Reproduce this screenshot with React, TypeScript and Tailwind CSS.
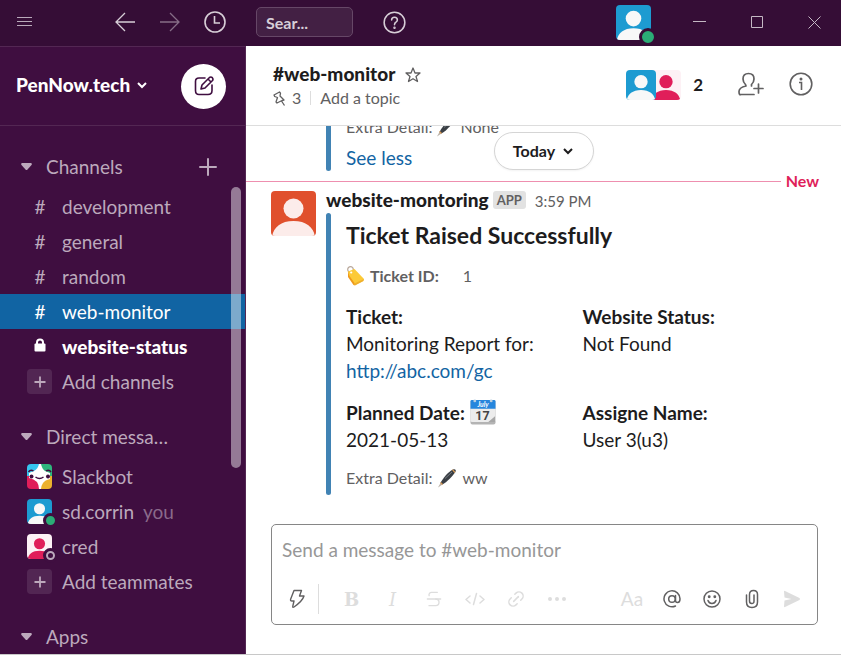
import { useId, type ReactNode } from "react";
import { Link2, Strikethrough } from "lucide-react";

type AvatarProps = { bg: string; fg: string; className: string };

function Avatar({ bg, fg, className }: AvatarProps) {
  return (
    <svg viewBox="0 0 36 36" className={className} aria-hidden="true">
      <rect width="36" height="36" fill={bg} />
      <circle cx="18" cy="14" r="8" fill={fg} />
      <path d="M1 36c1-7 7-12 17-12s16 5 17 12z" fill={fg} />
    </svg>
  );
}

function Chevron({ className }: { className: string }) {
  return (
    <svg viewBox="0 0 12 12" className={className} fill="none" stroke="currentColor" strokeWidth="2" aria-hidden="true">
      <path d="M2 4l4 4 4-4" />
    </svg>
  );
}

function Pen({ className }: { className: string }) {
  return (
    <svg viewBox="0 0 20 20" className={className} aria-hidden="true">
      <path d="M1 19.500l2.500-4.500 2 1.500z" fill="#b9b0a6" />
      <path d="M3.500 15C6 10 11 4 16 1.500c2-1 3.500.500 2.500 2.200C15.500 8 10.500 13.500 5.500 16.500z" fill="#3a3f45" />
      <path d="M8 10.500l7-6.500" stroke="#858c92" strokeWidth="0.800" />
      <path d="M3.500 14.500l2 2M15.500 1.700l2.500 2.800" stroke="#d99a55" strokeWidth="1.200" />
    </svg>
  );
}

function Tag() {
  return (
    <svg viewBox="0 0 20 20" className="size-5" aria-hidden="true">
      <circle cx="4.500" cy="3.500" r="2.800" fill="none" stroke="#b8a79a" strokeWidth="1.200" />
      <path d="M2 5.500l6.500-2.500L18 13l-1 2-8 4-1.500-1-5-8z" fill="#fcca37" />
      <path d="M2 5.500v5.500l5.500 8 1.500.500-.5-2.500L3.500 10z" fill="#ef9a1d" />
      <path d="M9 19.500l8.500-4.500.5-2-9.500 4.500z" fill="#efaf2b" />
      <circle cx="5.200" cy="6.500" r="1.100" fill="#fff" />
    </svg>
  );
}

function CalendarIcon() {
  return (
    <svg viewBox="0 0 27 27" className="mb-[3px] size-[26px]" aria-hidden="true">
      <rect x="0.500" y="1" width="26" height="25.500" rx="2" fill="#b4b4b4" />
      <rect x="0.500" y="1" width="26" height="23" rx="2" fill="#ececec" />
      <path d="M.5 10V2.500Q.5 1 2 1h23q1.500 0 1.500 1.500V10z" fill="#2686dd" />
      <path d="M19 24l7-6v6z" fill="#a7a7a7" />
      <circle cx="5" cy="2" r="1.500" fill="#b8cee0" />
      <circle cx="22" cy="2" r="1.500" fill="#b8cee0" />
      <text x="13.500" y="8" textAnchor="middle" fontFamily="Lato" fontWeight="700" fontStyle="italic" fontSize="7" fill="#fff">July</text>
      <text x="13" y="22" textAnchor="middle" fontFamily="Roboto" fontWeight="700" fontSize="13" fill="#444">17</text>
    </svg>
  );
}

function SlackbotIcon() {
  const clip = useId();
  return (
    <svg viewBox="0 0 25 25" className="size-[25px]" aria-hidden="true">
      <clipPath id={clip}><rect width="25" height="25" rx="4" /></clipPath>
      <g clipPath={`url(#${clip})`}>
        <path d="M0 0h13v13H0z" fill="#36c5f0" />
        <path d="M12 0h13v13H12z" fill="#2eb67d" />
        <path d="M0 12h13v13H0z" fill="#e01e5a" />
        <path d="M12 12h13v13H12z" fill="#ecb22e" />
        <path d="M12 0h2q1 5 4 7l5 2v6q-5 1-7 4-2 3-2 6h-2q0-4-2-7-3-3-8-4V9l5-2q4-2 5-7z" fill="#fff" />
        <circle cx="4.500" cy="12.500" r="2" fill="#3f0e40" />
        <circle cx="21" cy="12.500" r="2" fill="#3f0e40" />
        <path d="M1.500 8q2-3 5-1M19 7q3-2 5 1M8.500 13q4 3 8 0" fill="none" stroke="#3f0e40" strokeWidth="1.500" />
      </g>
    </svg>
  );
}

function SectionHeading({ title, action }: { title: string; action?: ReactNode }) {
  return (
    <div className="mb-[5px] flex h-[35px] items-center pr-7 pl-[21px]">
      <button className="flex items-center gap-[14px]">
        <svg viewBox="0 0 11 7" className="h-[7px] w-[11px]" fill="currentColor" aria-hidden="true">
          <path d="M1 0h9q1.500.500.500 2L6.500 6.500q-1 1-2 0L.5 2Q-.5.500 1 0z" />
        </svg>
        <span className="pt-0.5">{title}</span>
      </button>
      {action}
    </div>
  );
}

type RowProps = { icon: ReactNode; children: ReactNode; tone?: string };

function Row({ icon, children, tone = "" }: RowProps) {
  return (
    <li>
      <a href="#" className={`flex h-[35px] items-center gap-[10px] pl-[27px] ${tone}`}>
        <span className="relative flex size-[25px] shrink-0 items-center justify-center">{icon}</span>
        <span className="pt-0.5">{children}</span>
      </a>
    </li>
  );
}

function Hash() {
  return <span className="pt-0.5 pl-px">#</span>;
}

function PlusTile() {
  return (
    <span className="flex size-[25px] items-center justify-center rounded bg-white/10">
      <svg viewBox="0 0 12 12" className="size-3" stroke="currentColor" strokeWidth="1.800" aria-hidden="true">
        <path d="M6 .5v11M.5 6h11" />
      </svg>
    </span>
  );
}

function Sidebar() {
  return (
    <nav className="relative flex w-[246px] shrink-0 flex-col overflow-hidden border-t border-r border-[#532753] bg-[#3f0e40] text-[19px] text-[#bca9bc]">
      <div className="flex h-[79px] shrink-0 items-center justify-between border-b border-[#532753] pr-[19px] pl-4">
        <button className="flex items-center gap-[6px] pb-0.5 font-black text-white">
          PenNow.tech
          <Chevron className="size-3" />
        </button>
        <button aria-label="New message" className="flex size-[45px] items-center justify-center rounded-full bg-white text-[#3f0e40]">
          <svg viewBox="0 0 20 20" className="size-5" fill="none" stroke="currentColor" strokeWidth="1.600" strokeLinejoin="round" strokeLinecap="round" aria-hidden="true">
            <path d="M11 2H5Q1.500 2 1.500 5.500v9Q1.500 18.500 5 18.500h9q4 0 4-4V9" />
            <path d="M7 13l1-4 7.500-7.500q1.500-1 2.800.2 1.200 1.300.2 2.800L11 12zM14 3l3 3" />
          </svg>
        </button>
      </div>
      <div className="min-h-0 flex-1 overflow-hidden pt-[23px]">
        <SectionHeading
          title="Channels"
          action={
            <button aria-label="Add channel" className="ml-auto">
              <svg viewBox="0 0 18 18" className="size-[18px]" stroke="currentColor" strokeWidth="2" strokeLinecap="round" aria-hidden="true">
                <path d="M9 1v16M1 9h16" />
              </svg>
            </button>
          }
        />
        <ul className="mb-5">
          <Row icon={<Hash />}>development</Row>
          <Row icon={<Hash />}>general</Row>
          <Row icon={<Hash />}>random</Row>
          <Row icon={<Hash />} tone="bg-[#1164a3] text-white">web-monitor</Row>
          <Row
            tone="font-black text-white"
            icon={
              <svg viewBox="0 0 12 14" className="mb-1 h-[14px] w-3" aria-hidden="true">
                <rect x="0.500" y="5.500" width="11" height="8" rx="1" fill="currentColor" />
                <path d="M3 6.500V4.500q0-3 3-3t3 3v2" fill="none" stroke="currentColor" strokeWidth="2" />
              </svg>
            }
          >
            website-status
          </Row>
          <Row icon={<PlusTile />}>Add channels</Row>
        </ul>
        <SectionHeading title="Direct messa…" />
        <ul className="mb-5">
          <Row icon={<SlackbotIcon />}>Slackbot</Row>
          <Row
            icon={
              <>
                <Avatar bg="#1d9bd1" fg="#f8f8f8" className="size-[25px] rounded" />
                <span className="absolute -right-1.5 -bottom-1 size-[15px] rounded-full border-3 border-[#3f0e40] bg-[#2bac76]" />
              </>
            }
          >
            sd.corrin <span className="ml-1 text-[#8a6a8b]">you</span>
          </Row>
          <Row
            icon={
              <>
                <Avatar bg="#fdf1f5" fg="#e01e5a" className="size-[25px] rounded" />
                <span className="absolute -right-1.5 -bottom-1 flex size-[15px] rounded-full border-3 border-[#3f0e40] bg-[#3f0e40]">
                  <span className="flex-1 rounded-full border-2 border-[#bca9bc]" />
                </span>
              </>
            }
          >
            cred
          </Row>
          <Row icon={<PlusTile />}>Add teammates</Row>
        </ul>
        <SectionHeading title="Apps" />
      </div>
      <div className="absolute top-[140px] right-1 h-[281px] w-[10px] rounded-full bg-white/45" />
    </nav>
  );
}

function TitleBar() {
  return (
    <header className="flex h-[46px] shrink-0 items-center bg-[#350d36] text-[#d7ced7]">
      <button aria-label="Menu" className="mb-[2px] ml-[17px]">
        <svg viewBox="0 0 15 10" className="h-[10px] w-[15px]" stroke="#b9a9ba" strokeWidth="1" aria-hidden="true">
          <path d="M0 .5h15M0 4.500h15M0 8.500h15" />
        </svg>
      </button>
      <button aria-label="Back" className="mb-[2px] ml-[83px]">
        <svg viewBox="0 0 20 20" className="size-5" fill="none" stroke="currentColor" strokeWidth="1.300" aria-hidden="true">
          <path d="M20 10H1M10 1l-9 9 9 9" />
        </svg>
      </button>
      <button aria-label="Forward" className="mb-[2px] ml-[25px] text-[#866d87]">
        <svg viewBox="0 0 20 20" className="size-5" fill="none" stroke="currentColor" strokeWidth="1.300" aria-hidden="true">
          <path d="M0 10h19M10 1l9 9-9 9" />
        </svg>
      </button>
      <button aria-label="History" className="mb-[2px] ml-6">
        <svg viewBox="0 0 22 22" className="size-[22px]" fill="none" stroke="currentColor" strokeWidth="1.600" aria-hidden="true">
          <circle cx="11" cy="11" r="10" />
          <path d="M10.500 5v7H16" />
        </svg>
      </button>
      <input
        type="text"
        aria-label="Search"
        placeholder="Sear..."
        className="mb-[2px] ml-[30px] h-[30px] w-[97px] rounded-[5px] border border-[#664767] bg-[#432044] px-[9px] text-[16px] font-bold placeholder:text-[#d7ced7]"
      />
      <button aria-label="Help" className="mb-[2px] ml-[30px]">
        <svg viewBox="0 0 24 24" className="size-[23px]" fill="none" stroke="currentColor" strokeWidth="1.600" strokeLinecap="round" aria-hidden="true">
          <circle cx="12" cy="12" r="10.800" />
          <path d="M9 9.500q0-3 3-3t3 3q0 1.300-1.500 2.200Q12 12.500 12 14.300" />
          <circle cx="12" cy="17.500" r="0.500" fill="currentColor" />
        </svg>
      </button>
      <button aria-label="Your profile" className="relative mb-[2px] ml-auto">
        <Avatar bg="#1d9bd1" fg="#f8f8f8" className="size-[35px] rounded" />
        <span className="absolute -right-1.5 -bottom-1.5 size-[18px] rounded-full border-3 border-[#350d36] bg-[#2bac76]" />
      </button>
      <div className="mr-5 mb-[2px] ml-[42px] flex items-center gap-[45px] text-[#c4b8c4]">
        <button aria-label="Minimize">
          <svg viewBox="0 0 13 13" className="size-[13px]" stroke="currentColor" aria-hidden="true"><path d="M0 5.500h13" /></svg>
        </button>
        <button aria-label="Maximize">
          <svg viewBox="0 0 12 12" className="size-3" fill="none" stroke="currentColor" aria-hidden="true"><path d="M.5.500h11v11H.5z" /></svg>
        </button>
        <button aria-label="Close">
          <svg viewBox="0 0 13 13" className="size-[13px]" stroke="currentColor" aria-hidden="true"><path d="M.5.500l12 12M12.500.500l-12 12" /></svg>
        </button>
      </div>
    </header>
  );
}

function ChannelHeader() {
  return (
    <div className="flex h-20 shrink-0 items-center justify-between border-b border-[#dddddd] pr-7 pb-0.5 pl-[27px]">
      <div className="pt-[3px]">
        <div className="flex h-6 items-center gap-[10px]">
          <h1 className="text-[19px] font-black">#web-monitor</h1>
          <button aria-label="Star channel" className="pt-px text-[#616061]">
            <svg viewBox="0 0 16 16" className="size-4" fill="none" stroke="currentColor" strokeWidth="1.300" strokeLinejoin="round" aria-hidden="true">
              <path d="M8 1l2 5h5l-4 3.500 1.500 5L8 11.700l-4.500 2.800L5 9.500 1 6h5z" />
            </svg>
          </button>
        </div>
        <div className="flex h-6 items-center text-[16px] text-[#616061]">
          <button className="flex items-center gap-[6px]">
            <svg viewBox="0 0 13 15" className="h-[15px] w-[13px]" fill="none" stroke="currentColor" strokeWidth="1.300" strokeLinejoin="round" aria-hidden="true">
              <path d="M1 4l5.500-3 1 1.200L7 5l4 4-2 .5-5 2.500-1-1L4.500 6.500 1.700 5.500zM8.500 10l3 4.500" />
            </svg>
            3
          </button>
          <span className="mx-[9px] h-[14px] w-px bg-[#dddddd]" />
          <button>Add a topic</button>
        </div>
      </div>
      <div className="flex items-center">
        <button className="flex items-center">
          <Avatar bg="#1d9bd1" fg="#f8f8f8" className="z-10 size-[30px] rounded" />
          <Avatar bg="#fdf1f5" fg="#e01e5a" className="-ml-[5px] size-[30px] rounded" />
          <span className="ml-3 text-[17px] font-bold">2</span>
        </button>
        <button aria-label="Add people" className="mb-0.5 ml-[35px] text-[#616061]">
          <svg viewBox="0 0 26 24" className="h-6 w-[26px]" fill="none" stroke="currentColor" strokeWidth="1.700" strokeLinecap="round" strokeLinejoin="round" aria-hidden="true">
            <path d="M7.500 12.500Q5 10 5 7q0-5.500 5.500-5.500T16 7q0 3-2.500 5.500M7.500 12.500l.5 1.500Q1 15.500 1 19.500t2 3h13M13.500 12.500V14M20.500 12v9M16 16.500h9" />
          </svg>
        </button>
        <button aria-label="Channel details" className="mb-0.5 ml-[25px] text-[#616061]">
          <svg viewBox="0 0 24 24" className="size-6" fill="none" stroke="currentColor" strokeWidth="1.600" aria-hidden="true">
            <circle cx="12" cy="12" r="10.800" />
            <path d="M10 10.500h2.500V18" />
            <circle cx="12" cy="7" r="0.700" fill="currentColor" />
          </svg>
        </button>
      </div>
    </div>
  );
}

function Field({ label, children }: { label: ReactNode; children: ReactNode }) {
  return (
    <div>
      <dt className="flex h-[27px] items-center gap-[5px] pt-0.5 font-bold">{label}</dt>
      <dd className="leading-[27px]">{children}</dd>
    </div>
  );
}

function Messages() {
  return (
    <section className="relative flex min-h-0 flex-1 flex-col justify-end overflow-hidden pb-[29px]">
      <div className="relative ml-20 shrink-0 pl-5">
        <div className="absolute inset-y-0 left-0 w-[5px] rounded bg-[#4183b4]" />
        <p className="flex h-[30px] items-center pb-0.5 text-[16px] text-[#616061]">
          Extra Detail: <Pen className="mx-1 size-5" /> None
        </p>
        <a href="#" className="block h-7 text-[19px] leading-[30px] text-[#1264a3]">See less</a>
      </div>
      <div className="flex h-5 shrink-0 items-center gap-[5px] pr-[22px]">
        <div className="h-px flex-1 bg-[#ee8faf]" />
        <span className="text-[16px] font-bold text-[#e01e5a]">New</span>
      </div>
      <article className="flex shrink-0 gap-[10px] pr-[22px] pl-[25px]">
        <Avatar bg="#e0502d" fg="#fcecea" className="size-[45px] shrink-0 rounded" />
        <div className="min-w-0 flex-1 text-[19px]">
          <header className="flex h-[22px] items-center pb-1">
            <b className="font-black">website-montoring</b>
            <span className="ml-1 rounded-[3px] bg-[#e2e2e2] px-1 text-[13px] leading-[18px] font-bold text-[#616061]">APP</span>
            <time className="ml-[9px] pt-0.5 text-[15px] text-[#616061]">3:59 PM</time>
          </header>
          <div className="relative pb-px pl-5">
            <div className="absolute inset-y-0 left-0 w-[5px] rounded bg-[#4183b4]" />
            <h2 className="h-[46px] text-[23px] leading-[44px] font-bold">Ticket Raised Successfully</h2>
            <p className="flex h-[34px] items-center text-[16px] text-[#616061]">
              <Tag />
              <b className="ml-1">Ticket ID:</b>
              <span className="ml-6">1</span>
            </p>
            <dl className="mt-[10px] grid grid-cols-2 gap-y-[15px]">
              <Field label="Ticket:">
                Monitoring Report for:
                <a href="#" className="block text-[#1264a3]">http://abc.com/gc</a>
              </Field>
              <Field label="Website Status:">Not Found</Field>
              <Field label={<>Planned Date: <CalendarIcon /></>}>2021-05-13</Field>
              <Field label="Assigne Name:">User 3(u3)</Field>
            </dl>
            <p className="mt-[9px] flex h-8 items-center text-[16px] text-[#616061]">
              Extra Detail: <Pen className="mx-[5px] size-5" /> ww
            </p>
          </div>
        </div>
      </article>
      <button className="absolute top-[6px] left-1/2 flex h-[38px] w-[100px] -translate-x-1/2 items-center justify-center gap-[7px] rounded-full border border-[#d5d5d5] bg-white text-[16px] font-bold shadow-xs">
        Today
        <Chevron className="size-3" />
      </button>
    </section>
  );
}

function Tool({ label, wide, children }: { label: string; wide?: boolean; children: ReactNode }) {
  return (
    <button aria-label={label} className={`flex h-[30px] items-center justify-center ${wide ? "w-[41px]" : "w-10"}`}>
      {children}
    </button>
  );
}

function Composer() {
  return (
    <form className="mr-[23px] mb-[29px] ml-[25px] flex h-[101px] shrink-0 flex-col justify-between rounded-[5px] border border-[#868686] pb-[10px]">
      <textarea
        aria-label="Message #web-monitor"
        placeholder="Send a message to #web-monitor"
        rows={1}
        className="block resize-none px-[10px] pt-[11px] text-[19px] leading-[28px] placeholder:text-[#979797]"
      />
      <div className="flex items-center justify-between px-[5px]">
        <div className="flex items-center text-[#dddddd]">
          <Tool label="Shortcuts">
            <svg viewBox="0 0 16 20" className="h-5 w-4 text-[#616061]" fill="none" stroke="currentColor" strokeWidth="1.400" strokeLinejoin="round" aria-hidden="true">
              <path d="M5 1.500h7.500L10.500 7H15Q13.500 12 5 18q-1.500 1-1.200-.8L5 12H3Q1 12 1.700 10z" />
            </svg>
          </Tool>
          <span className="mr-3 ml-px h-[30px] w-px bg-[#dddddd]" />
          <Tool wide label="Bold"><span className="font-['DejaVu_Serif'] text-[18px] font-bold">B</span></Tool>
          <Tool wide label="Italic"><span className="font-['DejaVu_Serif'] text-[18px] italic">I</span></Tool>
          <Tool wide label="Strikethrough"><Strikethrough size={20} strokeWidth={1.6} /></Tool>
          <Tool wide label="Code">
            <svg viewBox="0 0 20 16" className="h-4 w-5" fill="none" stroke="currentColor" strokeWidth="1.500" strokeLinejoin="round" strokeLinecap="round" aria-hidden="true">
              <path d="M5 5L1 8.500 5 12M15 5l4 3.500-4 3.500M11.500 2.500l-3 11" />
            </svg>
          </Tool>
          <Tool wide label="Link"><Link2 size={20} strokeWidth={1.8} className="-rotate-45" /></Tool>
          <Tool wide label="More formatting">
            <svg viewBox="0 0 18 4" className="h-1 w-[18px]" fill="currentColor" aria-hidden="true">
              <circle cx="2" cy="2" r="2" /><circle cx="9" cy="2" r="2" /><circle cx="16" cy="2" r="2" />
            </svg>
          </Tool>
        </div>
        <div className="flex items-center text-[#616061]">
          <Tool label="Hide formatting"><span className="text-[19px] text-[#dddddd]">Aa</span></Tool>
          <Tool label="Mention someone">
            <svg viewBox="0 0 18 18" className="size-[18px]" fill="none" stroke="currentColor" strokeWidth="1.500" strokeLinecap="round" aria-hidden="true">
              <circle cx="9" cy="9" r="3.300" />
              <path d="M12.500 5.500v5q0 2 2 2 2.500 0 2.500-3.500A8 8 0 1 0 12.500 16" />
            </svg>
          </Tool>
          <Tool label="Emoji">
            <svg viewBox="0 0 18 18" className="size-[18px]" fill="none" stroke="currentColor" strokeWidth="1.500" strokeLinecap="round" aria-hidden="true">
              <circle cx="9" cy="9" r="8" />
              <path d="M5 10.500q1 3 4 3t4-3" />
              <circle cx="6.200" cy="6.700" r="0.700" fill="currentColor" />
              <circle cx="11.800" cy="6.700" r="0.700" fill="currentColor" />
            </svg>
          </Tool>
          <Tool label="Attach file">
            <svg viewBox="0 0 14 20" className="h-5 w-[14px]" fill="none" stroke="currentColor" strokeWidth="1.500" strokeLinecap="round" aria-hidden="true">
              <path d="M1.500 6v7q0 5.500 5.500 5.500t5.500-5.500V5.500Q12.500 1.500 8.500 1.500T4.500 5.500V12q0 2.500 2.300 2.500T9 12V6" />
            </svg>
          </Tool>
          <Tool label="Send">
            <svg viewBox="0 0 18 18" className="size-[18px] text-[#dddddd]" fill="currentColor" aria-hidden="true">
              <path d="M1 1.500q0-1 1-.5l14.500 7q1 1 0 2L2 17q-1 .5-1-.5L1.500 10.500l7-1.500-7-1.500z" />
            </svg>
          </Tool>
        </div>
      </div>
    </form>
  );
}

export default function App() {
  return (
    <div className="flex h-screen flex-col border-b border-[#c8c8c8] bg-white font-['Lato',sans-serif] text-[#1d1c1d]">
      <TitleBar />
      <div className="flex min-h-0 flex-1">
        <Sidebar />
        <main className="flex min-w-0 flex-1 flex-col">
          <ChannelHeader />
          <Messages />
          <Composer />
        </main>
      </div>
    </div>
  );
}
